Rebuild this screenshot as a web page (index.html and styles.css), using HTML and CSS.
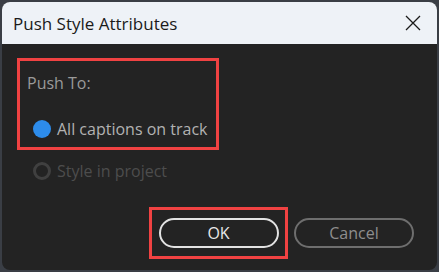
FILE: index.html
```html
<!DOCTYPE html>
<html>
<head>
<meta charset="utf-8">
<link rel="stylesheet" href="styles.css">
</head>
<body>
<div class="window">
  <div class="titlebar">
    <span class="title">Push Style Attributes</span>
    <svg class="close" width="16" height="16" viewBox="0 0 16 16"><path d="M1 1 L15 15 M15 1 L1 15" stroke="#1b1b1b" stroke-width="1.3" fill="none"/></svg>
  </div>
  <div class="content">
    <div class="highlight group">
      <div class="label">Push To:</div>
      <div class="radio-row">
        <span class="radio checked"></span>
        <span class="radio-text">All captions on track</span>
      </div>
    </div>
    <div class="radio-row disabled">
      <span class="radio"></span>
      <span class="radio-text">Style in project</span>
    </div>
  </div>
  <div class="footer">
    <div class="highlight okwrap">
      <button class="btn ok">OK</button>
    </div>
    <button class="btn cancel">Cancel</button>
  </div>
</div>
</body>
</html>
```
FILE: styles.css
```css
html, body {
  margin: 0;
  padding: 0;
  background: #3a3e45;
  width: 439px;
  height: 272px;
  overflow: hidden;
}
.window {
  margin: 2px;
  width: 435px;
  height: 268px;
  border-radius: 8px;
  overflow: hidden;
  background: #232323;
  display: flex;
  flex-direction: column;
}
.titlebar {
  height: 42px;
  background: #eef2f7;
  display: flex;
  align-items: center;
  justify-content: space-between;
  padding: 0 16px 0 11px;
  flex-shrink: 0;
}
.title {
  font-family: "Open Sans", "Noto Sans", sans-serif;
  font-size: 17px;
  color: #1a1a1a;
  margin-top: 1px;
}
.close {
  display: block;
}
.content {
  padding: 14px 0 0 15px;
  font-family: "Open Sans", "Noto Sans", sans-serif;
  font-size: 16px;
}
.highlight {
  border: 3px solid #f04242;
  box-sizing: border-box;
}
.group {
  width: 202px;
  height: 92px;
  padding: 11px 0 0 7px;
}
.label {
  color: #9a9a9a;
  line-height: 22px;
}
.group .radio-row {
  margin-top: 24px;
  margin-left: 6px;
}
.radio-row {
  display: flex;
  align-items: center;
  gap: 6px;
  height: 22px;
}
.radio {
  width: 18px;
  height: 18px;
  border-radius: 50%;
  box-sizing: border-box;
  border: 3px solid #404040;
  flex-shrink: 0;
}
.radio.checked {
  background: #2d8ceb;
  border: none;
}
.radio-text {
  color: #b2b2b2;
  line-height: 22px;
}
.disabled {
  margin-top: 10px;
  margin-left: 16px;
}
.disabled .radio-text {
  color: #4d4d4d;
}
.footer {
  margin-top: auto;
  display: flex;
  align-items: center;
  padding: 0 0 11px 147px;
}
.okwrap {
  width: 139px;
  height: 52px;
  display: flex;
  align-items: center;
  justify-content: center;
  margin-right: 6px;
}
.btn {
  width: 120px;
  height: 30px;
  border-radius: 15px;
  background: transparent;
  box-sizing: border-box;
  font-family: "Open Sans", "Noto Sans", sans-serif;
  font-size: 16px;
  padding: 0;
}
.ok {
  border: 2px solid #e2e2e2;
  color: #e8e8e8;
}
.cancel {
  border: 2px solid #6e6e6e;
  color: #8e8e8e;
}
```
